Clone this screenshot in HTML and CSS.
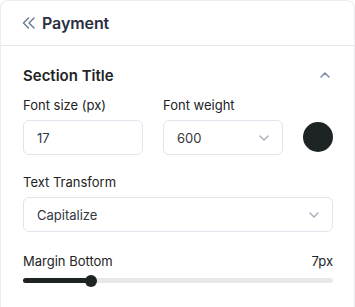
FILE: index.html
```html
<!DOCTYPE html>
<html>
<head>
<meta charset="utf-8">
<link rel="stylesheet" href="styles.css">
</head>
<body>
<div class="panel">
  <div class="header">
    <svg class="back" width="14" height="14" viewBox="0 0 14 14" fill="none" stroke="#6f7d92" stroke-width="1.5" stroke-linecap="round" stroke-linejoin="round"><path d="M6.5 2 L1.5 7 L6.5 12"/><path d="M12 2 L7 7 L12 12"/></svg>
    <span class="title">Payment</span>
  </div>
  <div class="body">
    <div class="section-head">
      <span class="section-title">Section Title</span>
      <svg class="caret" width="12" height="8" viewBox="0 0 12 8" fill="none" stroke="#7a8aa0" stroke-width="1.5" stroke-linecap="round" stroke-linejoin="round"><path d="M2 6 L6 2 L10 6"/></svg>
    </div>
    <div class="row">
      <div class="field">
        <label class="label">Font size (px)</label>
        <div class="box">17</div>
      </div>
      <div class="field">
        <label class="label">Font weight</label>
        <div class="box select">600
          <svg class="chev" width="12" height="8" viewBox="0 0 12 8" fill="none" stroke="#a3a8b5" stroke-width="1.3" stroke-linecap="round" stroke-linejoin="round"><path d="M2 2 L6 6 L10 2"/></svg>
        </div>
      </div>
      <div class="swatch"></div>
    </div>
    <div class="field wide">
      <label class="label">Text Transform</label>
      <div class="box select">Capitalize
        <svg class="chev" width="12" height="8" viewBox="0 0 12 8" fill="none" stroke="#a3a8b5" stroke-width="1.3" stroke-linecap="round" stroke-linejoin="round"><path d="M2 2 L6 6 L10 2"/></svg>
      </div>
    </div>
    <div class="slider-head">
      <span class="label">Margin Bottom</span>
      <span class="label">7px</span>
    </div>
    <div class="track">
      <div class="fill" style="width: 22%"></div>
      <div class="knob" style="left: 22%"></div>
    </div>
  </div>
</div>
</body>
</html>
```

FILE: styles.css
```css
* { box-sizing: border-box; }
html, body { margin: 0; padding: 0; background: #fff; }
body {
  font-family: Inter, "Liberation Sans", sans-serif;
  color: #222325;
  width: 355px;
  height: 307px;
  overflow: hidden;
}
.panel {
  border: 1px solid #ececef;
  border-bottom: none;
  border-radius: 8px 8px 0 0;
  height: 307px;
}
.header {
  display: flex;
  align-items: center;
  gap: 6px;
  height: 45px;
  padding: 0 0 0 21px;
  border-bottom: 1px solid #e6e6f0;
}
.back { flex: none; }
.title {
  font-size: 16px;
  font-weight: 600;
  color: #2b3040;
  letter-spacing: -0.1px;
}
.body {
  padding: 19px 21px 0 22px;
}
.section-head {
  display: flex;
  justify-content: space-between;
  align-items: center;
  height: 20px;
}
.section-title {
  font-size: 15px;
  font-weight: 600;
  color: #222325;
}
.caret { margin-right: 2px; }
.row {
  display: flex;
  align-items: flex-end;
  gap: 20px;
  margin-top: 12px;
}
.field {
  display: flex;
  flex-direction: column;
  gap: 7px;
  width: 120px;
}
.field.wide {
  width: auto;
  margin-top: 19px;
}
.label {
  font-size: 13px;
  color: #222325;
  line-height: 16px;
}
.box {
  height: 35px;
  border: 1px solid #e4e4ee;
  border-radius: 6px;
  display: flex;
  align-items: center;
  padding: 0 13px;
  font-size: 13px;
  color: #343742;
}
.select {
  justify-content: space-between;
  padding-right: 12px;
}
.swatch {
  width: 30px;
  height: 30px;
  border-radius: 50%;
  background: #1e2324;
  margin-bottom: 3px;
}
.slider-head {
  display: flex;
  justify-content: space-between;
  margin-top: 21px;
}
.track {
  position: relative;
  height: 5px;
  margin-top: 9px;
  background: #e8e8ea;
  border-radius: 3px;
}
.fill {
  height: 100%;
  background: #1e2324;
  border-radius: 3px;
}
.knob {
  position: absolute;
  top: 50%;
  width: 12px;
  height: 12px;
  margin: -6px 0 0 -6px;
  background: #1e2324;
  border-radius: 50%;
}
```
